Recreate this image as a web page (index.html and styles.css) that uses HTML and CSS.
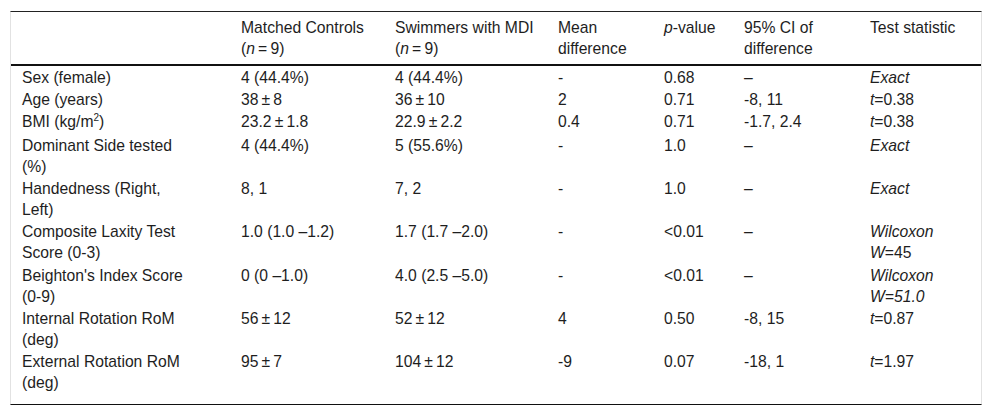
FILE: index.html
```html
<!DOCTYPE html>
<html lang="en">
<head>
<meta charset="utf-8">
<title>Table</title>
<link rel="stylesheet" href="styles.css">
</head>
<body>
<div class="wrap">
<table class="data">
  <colgroup>
    <col class="c1"><col class="c2"><col class="c3"><col class="c4"><col class="c5"><col class="c6"><col class="c7">
  </colgroup>
  <thead>
    <tr>
      <th></th>
      <th>Matched Controls<br>(<i>n</i>&#8201;=&#8201;9)</th>
      <th>Swimmers with MDI<br>(<i>n</i>&#8201;=&#8201;9)</th>
      <th>Mean<br>difference</th>
      <th><i>p</i>-value</th>
      <th>95% CI of<br>difference</th>
      <th>Test statistic</th>
    </tr>
  </thead>
  <tbody>
    <tr>
      <td>Sex (female)</td><td>4 (44.4%)</td><td>4 (44.4%)</td><td>-</td><td>0.68</td><td>–</td><td><i>Exact</i></td>
    </tr>
    <tr>
      <td>Age (years)</td><td>38&#8201;±&#8201;8</td><td>36&#8201;±&#8201;10</td><td>2</td><td>0.71</td><td>-8, 11</td><td><i>t</i>=0.38</td>
    </tr>
    <tr class="tall">
      <td>BMI (kg/m<sup>2</sup>)</td><td>23.2&#8201;±&#8201;1.8</td><td>22.9&#8201;±&#8201;2.2</td><td>0.4</td><td>0.71</td><td>-1.7, 2.4</td><td><i>t</i>=0.38</td>
    </tr>
    <tr>
      <td>Dominant Side tested<br>(%)</td><td>4 (44.4%)</td><td>5 (55.6%)</td><td>-</td><td>1.0</td><td>–</td><td><i>Exact</i></td>
    </tr>
    <tr>
      <td>Handedness (Right,<br>Left)</td><td>8, 1</td><td>7, 2</td><td>-</td><td>1.0</td><td>–</td><td><i>Exact</i></td>
    </tr>
    <tr class="step">
      <td>Composite Laxity Test<br>Score (0-3)</td><td>1.0 (1.0 –1.2)</td><td>1.7 (1.7 –2.0)</td><td>-</td><td>&lt;0.01</td><td>–</td><td><i>Wilcoxon<br>W</i>=45</td>
    </tr>
    <tr>
      <td>Beighton's Index Score<br>(0-9)</td><td>0 (0 –1.0)</td><td>4.0 (2.5 –5.0)</td><td>-</td><td>&lt;0.01</td><td>–</td><td><i>Wilcoxon<br>W=51.0</i></td>
    </tr>
    <tr>
      <td>Internal Rotation RoM<br>(deg)</td><td>56&#8201;±&#8201;12</td><td>52&#8201;±&#8201;12</td><td>4</td><td>0.50</td><td>-8, 15</td><td><i>t</i>=0.87</td>
    </tr>
    <tr class="last">
      <td>External Rotation RoM<br>(deg)</td><td>95&#8201;±&#8201;7</td><td>104&#8201;±&#8201;12</td><td>-9</td><td>0.07</td><td>-18, 1</td><td><i>t</i>=1.97</td>
    </tr>
  </tbody>
</table>
</div>
</body>
</html>
```
FILE: styles.css
```css
html, body {
  margin: 0;
  padding: 0;
  background: #ffffff;
}

.wrap {
  padding: 11px 10px 0 10px;
}

.data {
  width: 972px;
  table-layout: fixed;
  border-collapse: separate;
  border-spacing: 0;
  border-left: 1px solid #e2e2e2;
  border-right: 1px solid #e2e2e2;
  border-top: 1px solid #222;
  border-bottom: 1px solid #111;
  font-family: "Liberation Sans", Arial, sans-serif;
  font-size: 15.7px;
  line-height: 21px;
  color: #1e1e1e;
}

.c1 { width: 219px; }
.c2 { width: 154px; }
.c3 { width: 163px; }
.c4 { width: 106px; }
.c5 { width: 80px; }
.c6 { width: 126px; }
.c7 { width: 122px; }

.data th {
  font-weight: normal;
  text-align: left;
  vertical-align: top;
  padding: 5px 4px 5px 11px;
  border-bottom: 2px solid #111;
}

.data td {
  text-align: left;
  vertical-align: top;
  padding: 1px 4px 0 11px;
  white-space: nowrap;
}

.data sup {
  font-size: 10px;
  line-height: 0;
  vertical-align: 6px;
}

.data .tall td {
  padding-bottom: 2px;
}

.data .step td {
  padding-bottom: 1px;
}

.data .last td {
  padding-bottom: 11px;
}
```
